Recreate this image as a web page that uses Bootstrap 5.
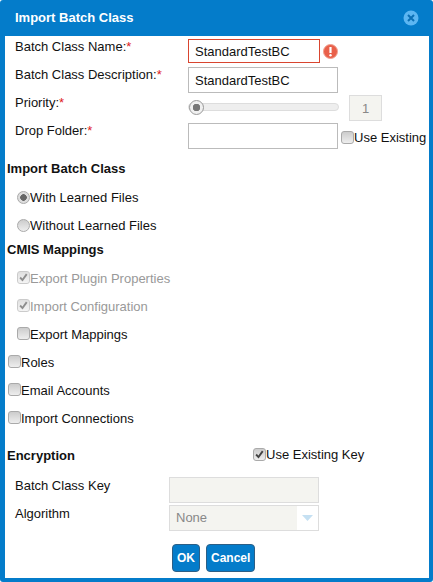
<!DOCTYPE html>
<html lang="en">
  <head>
    <meta charset="UTF-8" />
    <meta name="viewport" content="width=device-width, initial-scale=1.0" />
    <title>Import Batch Class</title>
    <link href="https://cdn.jsdelivr.net/npm/bootstrap@5.3.0/dist/css/bootstrap.min.css" rel="stylesheet" />
    <style>
      html, body { height: 582px; overflow: hidden; background: #fff; }
      body { font-family: "Liberation Sans", Arial, sans-serif; font-size: 13px; color: #111; line-height: 16px; }
      .dlg { width: 433px; height: 582px; background: #047cca; padding: 0 4px 4px 5px; border-radius: 3px; }
      .dlg-head { height: 36px; padding-left: 10px; padding-right: 10px; color: #fff; font-weight: 700; }
      .dlg-x { width: 16px; height: 16px; }
      .dlg-body { height: 542px; background: #fff; padding-top: 2px; }
      .field { height: 28px; padding-left: 10px; }
      .field-lbl { width: 173px; flex: none; align-self: flex-start; padding-top: 1px; }
      .req { color: #e02020; }
      .txt { height: 26px; width: 150px; border: 1px solid #bbb; padding: 0 6px; font: inherit; color: #111; border-radius: 0; outline: 0; background: #fff; }
      .txt-bad { width: 132px; height: 24px; border-color: #d9452f; margin-bottom: 2px; }
      .txt-off { background: #f4f4f0; border: 1px solid #ddd; color: #888; }
      .num { width: 33px; height: 26px; margin-left: 10px; text-align: center; padding: 0; }
      .warn { width: 15px; height: 15px; margin-left: 3px; margin-bottom: 2px; }
      .slide { -webkit-appearance: none; appearance: none; width: 151px; height: 8px; margin: 0 0 2px; background: #eee; border: 1px solid #ddd; border-radius: 4px; outline: 0; }
      .slide::-webkit-slider-thumb { -webkit-appearance: none; width: 15px; height: 15px; border-radius: 50%; border: 1px solid #999; background: radial-gradient(circle, #777 0 3.5px, #f0f0f0 4px); }
      .sect { height: 16px; font-weight: 700; padding-left: 2px; }
      .sect-a { margin-top: 11px; }
      .sect-b { margin-top: 4px; }
      .opt { height: 28px; padding-left: 3px; }
      .opt-in { padding-left: 12px; }
      .opt-a { margin-top: 5px; }
      .opt-txt { margin-top: 8px; }
      .chk { -webkit-appearance: none; appearance: none; width: 13px; height: 13px; margin: 8px 0 0; flex: none; align-self: flex-start; border: 1px solid #aaa; border-radius: 3px; background: linear-gradient(#ccc, #eee); background-position: center; background-repeat: no-repeat; }
      .chk:checked { background-image: url("data:image/svg+xml,%3Csvg xmlns='http://www.w3.org/2000/svg' viewBox='0 0 13 13'%3E%3Cpath d='M2.5 6.5l2.8 3 5-7' fill='none' stroke='%23444' stroke-width='2.2'/%3E%3C/svg%3E"), linear-gradient(#ccc, #eee); }
      .chk.chk-r { border-radius: 50%; margin-top: 9px; }
      .chk.chk-r:checked { background: radial-gradient(circle, #666 0 3px, #ddd 3.6px); }
      .chk-off { opacity: .6; }
      .chk-drop { margin: 9px 0 0 3px; }
      .chk-key { margin-top: 0; }
      .lbl-off { color: #999; }
      .enc-row { margin-top: 17px; padding-left: 2px; }
      .enc-lbl { width: 246px; flex: none; font-weight: 700; }
      .key-txt { margin-top: -1px; }
      .key-field { margin-top: 12px; }
      .key-lbl { width: 154px; flex: none; align-self: flex-start; padding-top: 2px; }
      .sel { width: 150px; height: 26px; line-height: 24px; }
      .sel-arrow { width: 21px; height: 24px; background: #fff; }
      .act-row { margin-top: 12px; padding-left: 167px; gap: 6px; }
      .act { height: 28px; padding: 0 4px; font-size: 12px; font-weight: 700; color: #fff; background: #047cca; border: 1px solid #2c5f86; border-radius: 4px; line-height: 26px; }
      .act:hover { color: #fff; background: #047cca; border-color: #2c5f86; }
    </style>
  </head>
  <body>
    <div class="dlg">
      <div class="dlg-head d-flex align-items-center justify-content-between">
        <span>Import Batch Class</span>
        <svg class="dlg-x" viewBox="0 0 16 16">
          <circle cx="8" cy="8" r="7.5" fill="#5cb6f2" />
          <path d="M5 5l6 6M11 5l-6 6" stroke="#0a6fb5" stroke-width="2" />
        </svg>
      </div>
      <div class="dlg-body">
        <div class="field d-flex align-items-center">
          <div class="field-lbl">Batch Class Name:<span class="req">*</span></div>
          <input class="txt txt-bad" type="text" value="StandardTestBC" />
          <svg class="warn" viewBox="0 0 15 15">
            <circle cx="7.5" cy="7.5" r="7" fill="#e9604a" stroke="#f0a090" />
            <path d="M7.5 3v6" stroke="#fff" stroke-width="2.2" />
            <circle cx="7.5" cy="11.3" r="1.2" fill="#fff" />
          </svg>
        </div>
        <div class="field d-flex align-items-center">
          <div class="field-lbl">Batch Class Description:<span class="req">*</span></div>
          <input class="txt" type="text" value="StandardTestBC" />
        </div>
        <div class="field d-flex align-items-center">
          <div class="field-lbl">Priority:<span class="req">*</span></div>
          <input class="slide" type="range" min="1" max="10" value="1" />
          <input class="txt txt-off num" type="text" value="1" disabled />
        </div>
        <div class="field d-flex align-items-center">
          <div class="field-lbl">Drop Folder:<span class="req">*</span></div>
          <input class="txt" type="text" />
          <input class="chk chk-drop" type="checkbox" />
          <span class="align-self-start opt-txt">Use Existing</span>
        </div>

        <div class="sect sect-a">Import Batch Class</div>
        <div class="opt opt-in opt-a d-flex"><input class="chk chk-r" type="radio" name="learn" checked /><span class="opt-txt">With Learned Files</span></div>
        <div class="opt opt-in d-flex"><input class="chk chk-r" type="radio" name="learn" /><span class="opt-txt">Without Learned Files</span></div>
        <div class="sect sect-b">CMIS Mappings</div>
        <div class="opt opt-in opt-a d-flex"><input class="chk chk-off" type="checkbox" checked disabled /><span class="opt-txt lbl-off">Export Plugin Properties</span></div>
        <div class="opt opt-in d-flex"><input class="chk chk-off" type="checkbox" checked disabled /><span class="opt-txt lbl-off">Import Configuration</span></div>
        <div class="opt opt-in d-flex"><input class="chk" type="checkbox" /><span class="opt-txt">Export Mappings</span></div>
        <div class="opt d-flex"><input class="chk" type="checkbox" /><span class="opt-txt">Roles</span></div>
        <div class="opt d-flex"><input class="chk" type="checkbox" /><span class="opt-txt">Email Accounts</span></div>
        <div class="opt d-flex"><input class="chk" type="checkbox" /><span class="opt-txt">Import Connections</span></div>

        <div class="enc-row d-flex">
          <div class="enc-lbl">Encryption</div>
          <div class="d-flex"><input class="chk chk-key" type="checkbox" checked /><span class="key-txt">Use Existing Key</span></div>
        </div>
        <div class="field key-field d-flex align-items-center">
          <div class="key-lbl">Batch Class Key</div>
          <input class="txt txt-off" type="text" disabled />
        </div>
        <div class="field d-flex align-items-center">
          <div class="key-lbl">Algorithm</div>
          <div class="sel txt txt-off d-flex justify-content-between pe-0">
            <span>None</span>
            <span class="sel-arrow d-flex align-items-center justify-content-center">
              <svg width="11" height="6" viewBox="0 0 11 6"><path d="M0 0h11L5.5 6z" fill="#c5e0f2" /></svg>
            </span>
          </div>
        </div>
        <div class="act-row d-flex">
          <button class="btn act" type="button">OK</button>
          <button class="btn act" type="button">Cancel</button>
        </div>
      </div>
    </div>
    <script src="https://cdn.jsdelivr.net/npm/bootstrap@5.3.0/dist/js/bootstrap.bundle.min.js"></script>
  </body>
</html>
